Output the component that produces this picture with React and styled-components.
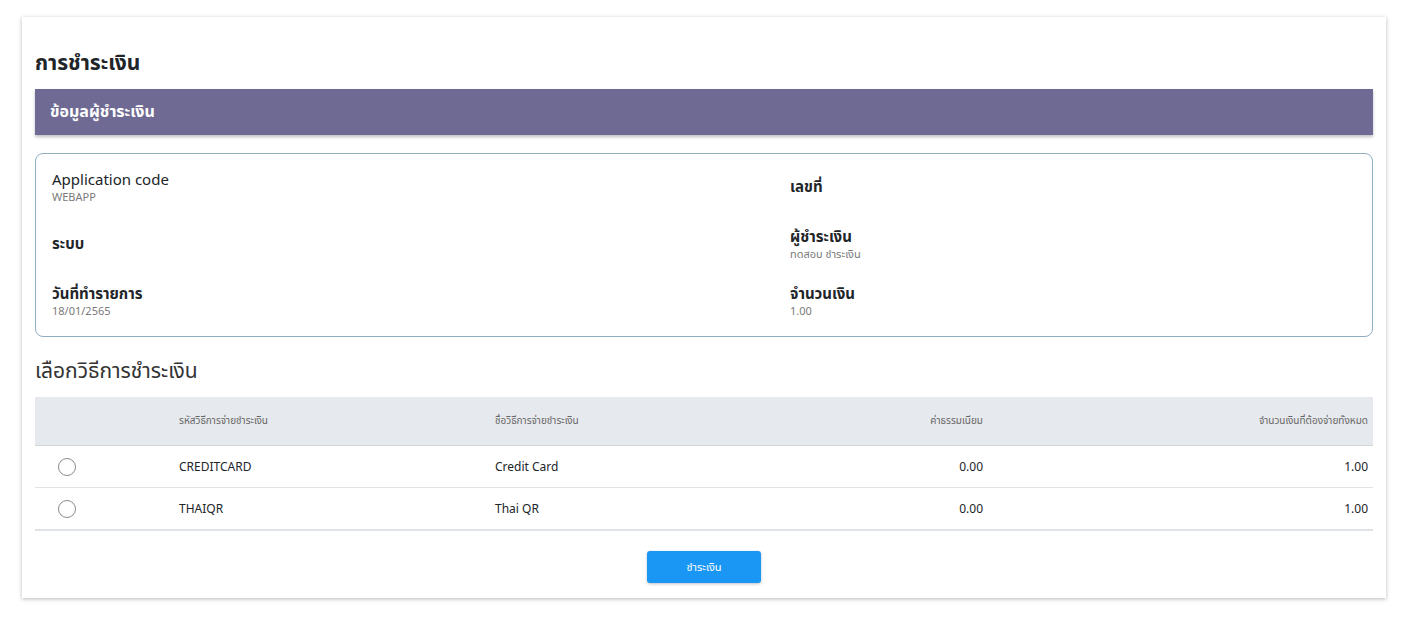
import styled, { createGlobalStyle } from "styled-components";

const purple = "#6f6a94";
const blue = "#1a97f5";
const textDark = "#212529";
const textGray = "#7a7a7a";
const headerGray = "#e6e9ed";
const lineGray = "#dfe2e6";

const GlobalStyle = createGlobalStyle`
  html, body {
    margin: 0;
    padding: 0;
    background: #ffffff;
    font-family: "Noto Sans", "Noto Sans Thai", "Open Sans", sans-serif;
    color: ${textDark};
  }
`;

const Page = styled.div`
  padding: 17px 22px 22px 22px;
`;

const Card = styled.div`
  background: #fff;
  box-shadow: 0 1px 4px rgba(0, 0, 0, 0.28);
  padding: 30px 13px 15px 13px;
`;

const PageTitle = styled.h1`
  margin: 0 0 12px 0;
  font-size: 21px;
  font-weight: 700;
  line-height: 30px;
  color: ${textDark};
`;

const Banner = styled.div`
  height: 46px;
  background: ${purple};
  color: #fff;
  font-size: 16px;
  font-weight: 700;
  display: flex;
  align-items: center;
  padding: 0 15px;
  box-shadow: 0 2px 3px rgba(0, 0, 0, 0.25);
`;

const InfoBox = styled.div`
  margin-top: 18px;
  border: 1px solid #8fb0c4;
  border-radius: 8px;
  padding: 11px 16px 0 16px;
  display: grid;
  grid-template-columns: 738px 1fr;
  grid-auto-rows: 57px;
`;

const Field = styled.div`
  display: flex;
  flex-direction: column;
  padding-top: ${(p) => (p.$empty ? "11px" : "4px")};
`;

const Label = styled.div`
  font-size: 15px;
  font-weight: ${(p) => (p.$bold ? 700 : 400)};
  line-height: 20px;
  color: ${textDark};
`;

const Value = styled.div`
  font-size: 11px;
  line-height: 15px;
  color: ${textGray};
`;

const SectionTitle = styled.h2`
  margin: 18px 0 12px 0;
  font-size: 21px;
  font-weight: 400;
  line-height: 30px;
  color: #333;
`;

const Table = styled.table`
  width: 100%;
  border-collapse: collapse;
  border-bottom: 2px solid ${lineGray};
`;

const HeadCell = styled.th`
  background: ${headerGray};
  height: 48px;
  padding: 0 5px;
  font-size: 10px;
  font-weight: 400;
  color: #666;
  text-align: ${(p) => p.$align || "left"};
  border-bottom: 1px solid #d3d7dc;
`;

const Cell = styled.td`
  height: 41px;
  padding: 0 5px;
  font-size: 12px;
  color: ${textDark};
  text-align: ${(p) => p.$align || "left"};
  border-bottom: 1px solid ${lineGray};
`;

const Radio = styled.span`
  display: inline-block;
  width: 16px;
  height: 16px;
  border: 1px solid #8a8a8a;
  border-radius: 50%;
  margin-left: 18px;
  vertical-align: middle;
`;

const Actions = styled.div`
  display: flex;
  justify-content: center;
  padding-top: 20px;
`;

const PayButton = styled.button`
  width: 114px;
  height: 32px;
  border: none;
  border-radius: 3px;
  background: ${blue};
  color: #fff;
  font-family: inherit;
  font-size: 11px;
  box-shadow: 0 1px 3px rgba(0, 0, 0, 0.25);
  cursor: pointer;
`;

const methods = [
  { code: "CREDITCARD", name: "Credit Card", fee: "0.00", total: "1.00" },
  { code: "THAIQR", name: "Thai QR", fee: "0.00", total: "1.00" },
];

export default function App() {
  return (
    <Page>
      <GlobalStyle />
      <Card>
        <PageTitle>การชำระเงิน</PageTitle>
        <Banner>ข้อมูลผู้ชำระเงิน</Banner>

        <InfoBox>
          <Field>
            <Label>Application code</Label>
            <Value>WEBAPP</Value>
          </Field>
          <Field $empty>
            <Label $bold>เลขที่</Label>
          </Field>
          <Field $empty>
            <Label $bold>ระบบ</Label>
          </Field>
          <Field>
            <Label $bold>ผู้ชำระเงิน</Label>
            <Value>ทดสอบ ชำระเงิน</Value>
          </Field>
          <Field>
            <Label $bold>วันที่ทำรายการ</Label>
            <Value>18/01/2565</Value>
          </Field>
          <Field>
            <Label $bold>จำนวนเงิน</Label>
            <Value>1.00</Value>
          </Field>
        </InfoBox>

        <SectionTitle>เลือกวิธีการชำระเงิน</SectionTitle>

        <Table>
          <colgroup>
            <col style={{ width: 139 }} />
            <col style={{ width: 316 }} />
            <col style={{ width: 300 }} />
            <col style={{ width: 198 }} />
            <col />
          </colgroup>
          <thead>
            <tr>
              <HeadCell />
              <HeadCell>รหัสวิธีการจ่ายชำระเงิน</HeadCell>
              <HeadCell>ชื่อวิธีการจ่ายชำระเงิน</HeadCell>
              <HeadCell $align="right">ค่าธรรมเนียม</HeadCell>
              <HeadCell $align="right">จำนวนเงินที่ต้องจ่ายทั้งหมด</HeadCell>
            </tr>
          </thead>
          <tbody>
            {methods.map((m) => (
              <tr key={m.code}>
                <Cell>
                  <Radio />
                </Cell>
                <Cell>{m.code}</Cell>
                <Cell>{m.name}</Cell>
                <Cell $align="right">{m.fee}</Cell>
                <Cell $align="right">{m.total}</Cell>
              </tr>
            ))}
          </tbody>
        </Table>

        <Actions>
          <PayButton>ชำระเงิน</PayButton>
        </Actions>
      </Card>
    </Page>
  );
}
